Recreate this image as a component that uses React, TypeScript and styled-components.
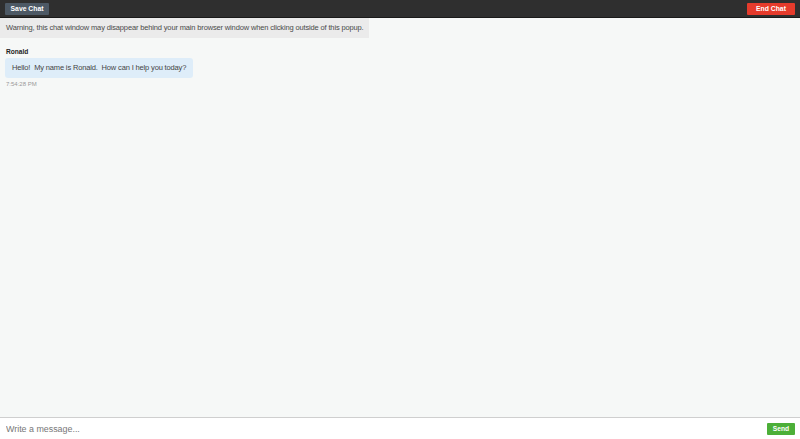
import React, { useState } from 'react'
import styled, { createGlobalStyle } from 'styled-components'

const GlobalStyle = createGlobalStyle`
  html, body, #root {
    margin: 0;
    padding: 0;
    height: 100%;
  }
  body {
    font-family: 'Liberation Sans', Arial, sans-serif;
    background: #f6f8f7;
  }
`

const Page = styled.div`
  display: flex;
  flex-direction: column;
  height: 100vh;
  background: #f6f8f7;
`

const TopBar = styled.div`
  display: flex;
  justify-content: space-between;
  align-items: center;
  height: 17px;
  padding: 0 5px;
  background: #2f2f2f;
  border-bottom: 1px solid #1a1a1a;
  flex-shrink: 0;
`

const BarButton = styled.button<{ variant: 'save' | 'end' }>`
  height: 12px;
  padding: 0;
  border: none;
  border-radius: 1px;
  font-family: 'Liberation Sans', Arial, sans-serif;
  font-size: 6.8px;
  font-weight: 700;
  line-height: 12px;
  color: #fff;
  cursor: pointer;
  background: ${p => (p.variant === 'save' ? '#4d5965' : '#e53b2c')};
  width: ${p => (p.variant === 'save' ? '44px' : '48px')};
`

const Messages = styled.div`
  flex: 1;
  overflow-y: auto;
  display: flex;
  flex-direction: column;
  align-items: flex-start;
`

const Warning = styled.div`
  background: #ebebeb;
  color: #4a4a4a;
  font-size: 7.5px;
  letter-spacing: -0.15px;
  line-height: 20px;
  padding: 0 6px;
  margin-bottom: 9px;
`

const MessageGroup = styled.div`
  display: flex;
  flex-direction: column;
  align-items: flex-start;
  padding: 0 5px;
`

const Sender = styled.div`
  font-size: 6.6px;
  font-weight: 700;
  color: #222;
  line-height: 10px;
  margin: 0 0 1px 1px;
`

const Bubble = styled.div`
  background: #deedf9;
  border-radius: 3px;
  color: #444;
  font-size: 7.5px;
  letter-spacing: -0.15px;
  line-height: 20px;
  padding: 0 7px;
  white-space: pre;
`

const Time = styled.div`
  font-size: 6px;
  color: #999;
  margin: 3px 0 0 1px;
`

const Composer = styled.div`
  display: flex;
  align-items: center;
  height: 21px;
  padding: 0 5px 0 6px;
  background: #fff;
  border-top: 1px solid #cfcfcf;
  flex-shrink: 0;
`

const Input = styled.input`
  flex: 1;
  border: none;
  outline: none;
  background: transparent;
  font-family: 'Liberation Sans', Arial, sans-serif;
  font-size: 8.9px;
  color: #333;
  padding: 0;
  &::placeholder {
    color: #777;
  }
`

const SendButton = styled.button`
  height: 12px;
  width: 28px;
  padding: 0;
  border: none;
  border-radius: 1px;
  background: #4caf38;
  color: #fff;
  font-family: 'Liberation Sans', Arial, sans-serif;
  font-size: 6.7px;
  font-weight: 700;
  cursor: pointer;
`

export default function App() {
  const [text, setText] = useState('')
  return (
    <>
      <GlobalStyle />
      <Page>
        <TopBar>
          <BarButton variant="save">Save Chat</BarButton>
          <BarButton variant="end">End Chat</BarButton>
        </TopBar>
        <Messages>
          <Warning>
            Warning, this chat window may disappear behind your main browser window when clicking outside of this popup.
          </Warning>
          <MessageGroup>
            <Sender>Ronald</Sender>
            <Bubble>{'Hello!  My name is Ronald.  How can I help you today?'}</Bubble>
            <Time>7:54:28 PM</Time>
          </MessageGroup>
        </Messages>
        <Composer>
          <Input
            placeholder="Write a message..."
            value={text}
            onChange={e => setText(e.target.value)}
          />
          <SendButton>Send</SendButton>
        </Composer>
      </Page>
    </>
  )
}
